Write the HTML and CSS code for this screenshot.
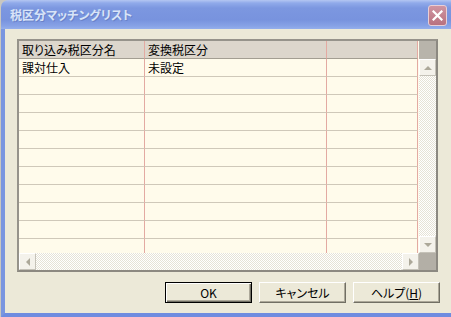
FILE: index.html
```html
<!DOCTYPE html>
<html lang="ja">
<head>
    <meta charset="UTF-8">
    <title>税区分マッチングリスト</title>
    <link rel="stylesheet" href="styles.css">
</head>
<body>
    <div class="window">
        <div class="titlebar">
            <span class="title">税区分マッチングリスト</span>
            <button class="close">
                <svg width="11" height="11" viewBox="0 0 11 11"><path d="M1.5 1.5 L9.5 9.5 M9.5 1.5 L1.5 9.5" stroke="#fff" stroke-width="2.2" stroke-linecap="square"/></svg>
            </button>
        </div>
        <div class="client">
            <div class="grid">
                <div class="cells">
                    <div class="row head">
                        <div class="cell">取り込み税区分名</div>
                        <div class="cell">変換税区分</div>
                        <div class="cell"></div>
                    </div>
                    <div class="row">
                        <div class="cell">課対仕入</div>
                        <div class="cell">未設定</div>
                        <div class="cell"></div>
                    </div>
                    <div class="row"><div class="cell"></div><div class="cell"></div><div class="cell"></div></div>
                    <div class="row"><div class="cell"></div><div class="cell"></div><div class="cell"></div></div>
                    <div class="row"><div class="cell"></div><div class="cell"></div><div class="cell"></div></div>
                    <div class="row"><div class="cell"></div><div class="cell"></div><div class="cell"></div></div>
                    <div class="row"><div class="cell"></div><div class="cell"></div><div class="cell"></div></div>
                    <div class="row"><div class="cell"></div><div class="cell"></div><div class="cell"></div></div>
                    <div class="row"><div class="cell"></div><div class="cell"></div><div class="cell"></div></div>
                    <div class="row"><div class="cell"></div><div class="cell"></div><div class="cell"></div></div>
                    <div class="row"><div class="cell"></div><div class="cell"></div><div class="cell"></div></div>
                    <div class="row"><div class="cell"></div><div class="cell"></div><div class="cell"></div></div>
                </div>
                <div class="vscroll">
                    <div class="vhead"></div>
                    <div class="sbtn"><span class="arrow up"></span></div>
                    <div class="track"></div>
                    <div class="sbtn"><span class="arrow down"></span></div>
                </div>
                <div class="hscroll">
                    <div class="sbtn"><span class="arrow left"></span></div>
                    <div class="track"></div>
                    <div class="sbtn"><span class="arrow right"></span></div>
                </div>
                <div class="corner"></div>
            </div>
            <div class="buttons">
                <button class="btn default">OK</button>
                <button class="btn">キャンセル</button>
                <button class="btn">ヘルプ(<u>H</u>)</button>
            </div>
        </div>
    </div>
</body>
</html>
```

FILE: styles.css
```css
html, body {
    margin: 0;
    height: 100%;
}
body {
    background-color: #c9c7c0;
    font-family: "Noto Sans CJK JP", "Noto Sans", sans-serif;
    font-size: 12px;
    font-feature-settings: "palt";
}
.window {
    margin-left: 1px;
    width: 450px;
    height: 317px;
    display: flex;
    flex-direction: column;
}
.titlebar {
    height: 29px;
    flex: none;
    box-sizing: border-box;
    display: flex;
    align-items: center;
    justify-content: space-between;
    padding: 0 4px 0 9px;
    border-radius: 7px 0 0 0;
    background: linear-gradient(to bottom, #b4c6f2 0, #90aaea 3px, #7c97e0 8px, #7893de 20px, #87a2e6 26px, #95afec 29px);
}
.title {
    color: #d8e4f8;
    font-weight: bold;
    font-size: 12px;
    text-shadow: 1px 1px 0 #6a82c8;
}
.close {
    width: 19px;
    height: 21px;
    margin-top: 1px;
    padding: 0;
    box-sizing: border-box;
    border: 1px solid #e9cfd6;
    border-radius: 3px;
    background: linear-gradient(to bottom, #cf95a2, #b9717f);
    display: flex;
    align-items: center;
    justify-content: center;
}
.client {
    flex: 1;
    background-color: #ece9d8;
    border-left: 4px solid #7a96e0;
    border-bottom: 4px solid #6f8ce0;
    padding: 10px 0 0 12px;
    display: flex;
    flex-direction: column;
}
.grid {
    width: 421px;
    height: 233px;
    box-sizing: border-box;
    border: 2px solid;
    border-color: #96938b #8c8981 #8c8981 #96938b;
    display: grid;
    grid-template-columns: 400px 17px;
    grid-template-rows: 212px 17px;
}
.cells {
    overflow: hidden;
    background-color: #fffbeb;
}
.row {
    display: grid;
    grid-template-columns: 126px 182px 91px;
}
.cell {
    height: 18px;
    box-sizing: border-box;
    padding-left: 3px;
    line-height: 17px;
    white-space: nowrap;
    border-right: 1px solid #e3aaa2;
    border-bottom: 1px solid #cfc8b9;
}
.head .cell {
    background-color: #dcd6cc;
    border-bottom-color: #a39e92;
}
.vscroll {
    display: flex;
    flex-direction: column;
}
.vhead {
    height: 18px;
    background-color: #b8b4ab;
}
.sbtn {
    width: 17px;
    height: 17px;
    flex: none;
    box-sizing: border-box;
    background-color: #f4f2eb;
    border: 1px solid;
    border-color: #fff #c5c2b8 #c5c2b8 #fff;
    display: flex;
    align-items: center;
    justify-content: center;
}
.track {
    flex: 1;
    background-color: #fff;
    background-image: conic-gradient(#e6e3d6 25%, #fff 0 50%, #e6e3d6 0 75%, #fff 0);
    background-size: 2px 2px;
}
.hscroll {
    display: flex;
}
.corner {
    background-color: #b3afa6;
}
.arrow {
    width: 0;
    height: 0;
    border: 4px solid transparent;
}
.arrow.up {
    border-top-width: 0;
    border-bottom-color: #aca899;
}
.arrow.down {
    border-bottom-width: 0;
    border-top-color: #aca899;
}
.arrow.left {
    border-left-width: 0;
    border-right-color: #aca899;
}
.arrow.right {
    border-right-width: 0;
    border-left-color: #aca899;
}
.buttons {
    display: flex;
    justify-content: flex-end;
    gap: 7px;
    margin-top: 10px;
    padding-right: 11px;
}
.btn {
    width: 87px;
    height: 21px;
    box-sizing: border-box;
    padding: 0;
    font-family: inherit;
    font-size: 12px;
    font-feature-settings: "palt";
    color: #000;
    background-color: #ece9d8;
    border: 1px solid;
    border-color: #fff #716f64 #716f64 #fff;
    box-shadow: inset -1px -1px 0 #aca899;
}
.btn.default {
    border-color: #000;
    box-shadow: inset 1px 1px 0 #fff, inset -1px -1px 0 #716f64, inset -2px -2px 0 #aca899;
}
```
